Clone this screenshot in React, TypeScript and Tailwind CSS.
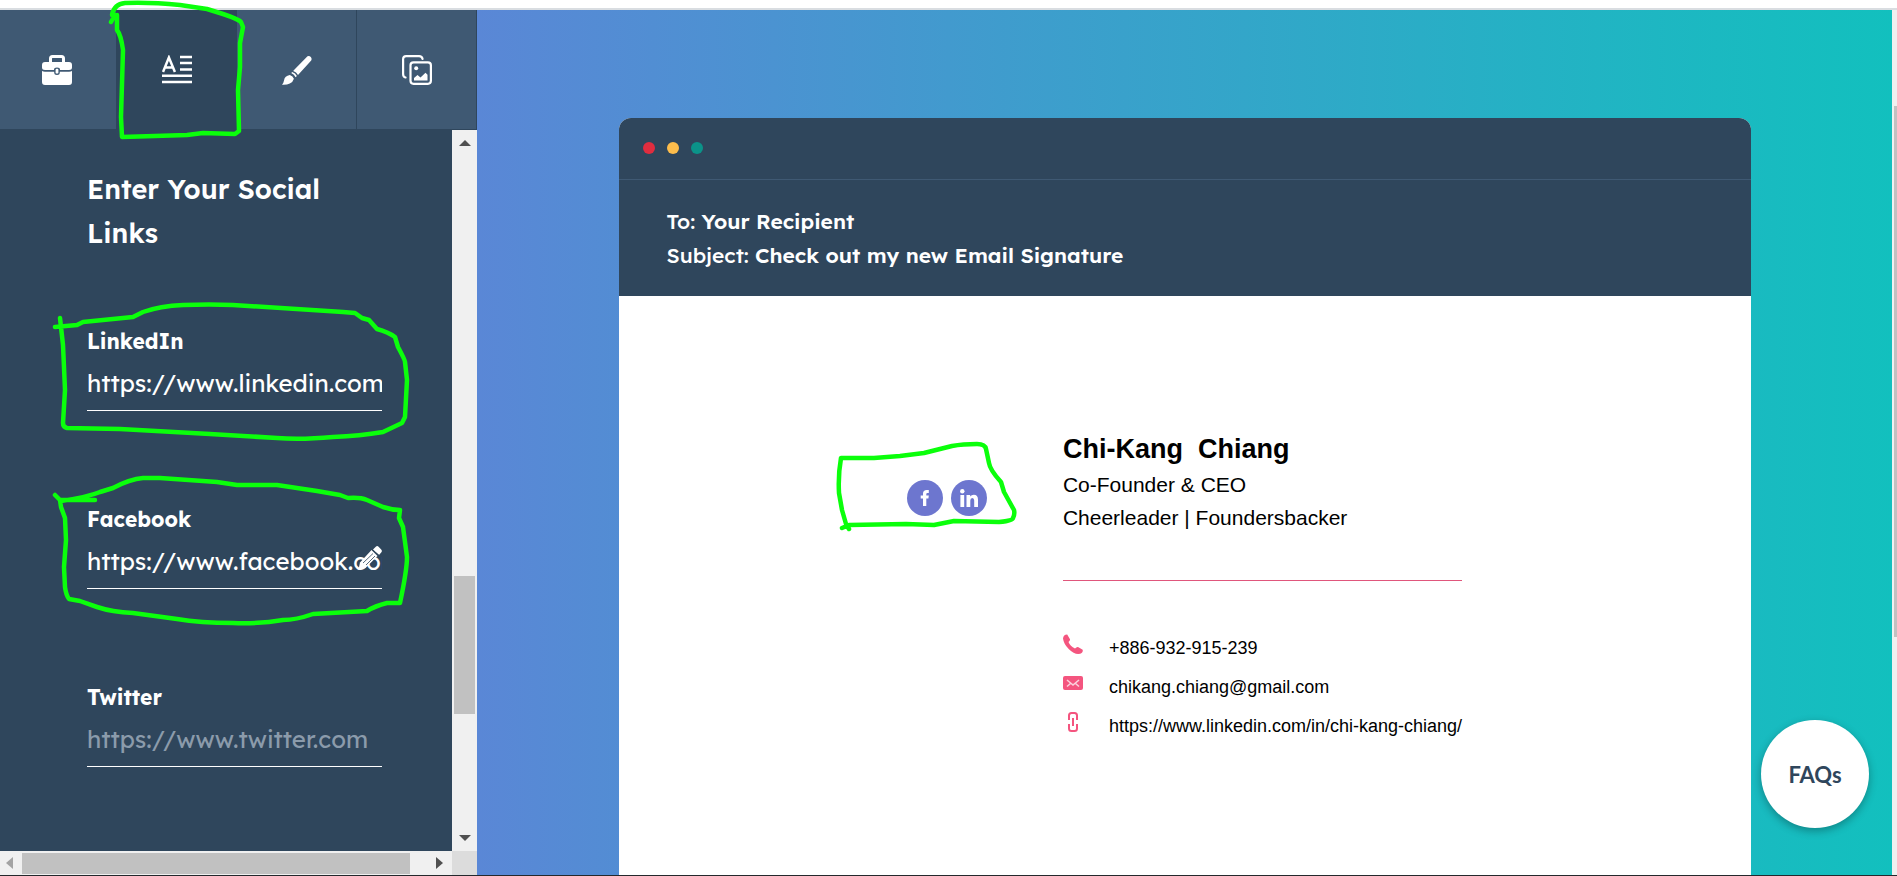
import React from "react";

const WIDE = "font-['Lexend','Open_Sans',sans-serif]";

function BriefcaseIcon() {
  return (
    <svg viewBox="0 0 30 30" className="size-[30px]" aria-hidden="true">
      <path d="M8.500 8V3.500a2 2 0 0 1 2-2h9a2 2 0 0 1 2 2V8" fill="none" stroke="#fff" strokeWidth="3" />
      <path d="M3 7h24a3 3 0 0 1 3 3v2.500q0 2.500-3 2.500h-9v-.5q0-2-3-2t-3 2v.5H3q-3 0-3-2.500V10a3 3 0 0 1 3-3Z" fill="#fff" />
      <path d="M0 16q1.200.8 3 .8h9.200v.7q0 2.500 2.800 2.500t2.800-2.500v-.7H27q1.800 0 3-.8v11a3 3 0 0 1-3 3H3a3 3 0 0 1-3-3Z" fill="#fff" />
      <rect x="13.600" y="13.800" width="2.800" height="4.800" rx="1.200" fill="#fff" />
    </svg>
  );
}

function TextIcon() {
  return (
    <svg viewBox="0 0 30 30" className="size-[30px]" aria-hidden="true" fill="none" stroke="#fff">
      <path d="M1 17 6.900 2.500 12.900 17M3.200 12.400h7.400" strokeWidth="2.500" />
      <path d="M18 2h12M18 8h12M18 14.500h12M0 20.700h30M0 27h30" strokeWidth="2.500" />
    </svg>
  );
}

function BrushIcon() {
  return (
    <svg viewBox="0 0 30 30" className="size-[30px]" aria-hidden="true" fill="#fff">
      <path d="M12.500 14.500 25.500 1.200a3 3 0 0 1 3.700 4.200L16 20a8 8 0 0 0-4.800-4Z" />
      <path d="m9.200 18 1-1.100q3.200 1 4.700 4.100l-1.300 1.300q-1.300-3.100-4.400-4.300Z" />
      <path d="M7.800 20q3.200 1 4.100 3.800-.9 3.300-4.100 4.800-3 1.500-7.800 1.200 1.600-2 2-4.400.7-4.600 5.800-5.400Z" />
    </svg>
  );
}

function GalleryIcon() {
  return (
    <svg viewBox="0 0 30 30" className="size-[30px]" aria-hidden="true">
      <path d="M3.500 22.500Q1.100 22 1.100 19V4a3 3 0 0 1 3-2.900h13q2.900 0 3.400 2.700" fill="none" stroke="#fff" strokeWidth="2.200" strokeLinecap="round" />
      <rect x="8.500" y="7.300" width="20.400" height="21.500" rx="3" fill="none" stroke="#fff" strokeWidth="2.200" />
      <circle cx="14.200" cy="13.200" r="2" fill="#fff" />
      <path d="M12 25.500V23l3.500-3 3 2.400 5-4.700 2 2v5.800Z" fill="#fff" />
    </svg>
  );
}

function PencilIcon() {
  return (
    <svg viewBox="0 0 24 24" className="absolute right-0 bottom-[19px] size-6" aria-hidden="true" fill="#fff">
      <path d="m15 3.500 2.800-2.700a2 2 0 0 1 2.800 0l2.600 2.800a2 2 0 0 1 0 2.800L21 9Z" />
      <path d="m13.500 4 6 6L7.500 22 .5 23.500 2 16.500Z" />
      <path d="m14 3.500 7 6" stroke="#2f465c" strokeWidth="1" />
      <path d="M5 17 15 7.500M8 19l9-9" stroke="#2f465c" strokeWidth=".8" />
    </svg>
  );
}

const tabs = [
  { name: "General", icon: <BriefcaseIcon />, look: "bg-[#3f5973] pr-0.5" },
  { name: "Social links", icon: <TextIcon />, look: "bg-[#2f465c]" },
  { name: "Design", icon: <BrushIcon />, look: "bg-[#3f5973]" },
  { name: "Images", icon: <GalleryIcon />, look: "bg-[#3f5973]" },
];

type FieldProps = { id: string; label: string; value?: string; placeholder?: string; editing?: boolean };

function Field({ id, label, value, placeholder, editing }: FieldProps) {
  return (
    <div className="relative flex h-[86px] flex-col">
      <label htmlFor={id} className="h-8 text-[21px] leading-8 font-bold">{label}</label>
      <input
        id={id}
        type="url"
        defaultValue={value}
        placeholder={placeholder}
        className="h-[54px] w-full border-b border-white bg-transparent pb-0.5 text-[24px] outline-none placeholder:text-[#8b9bab]"
      />
      {editing && <PencilIcon />}
    </div>
  );
}

function Arrow({ d, color }: { d: string; color: string }) {
  return (
    <svg viewBox="0 0 12 12" className="size-3" aria-hidden="true">
      <path d={d} fill={color} />
    </svg>
  );
}

function Sidebar() {
  return (
    <aside className="flex w-[477px] shrink-0 flex-col bg-[#2f465c]">
      <nav className="grid h-[119px] shrink-0 grid-cols-[117fr_120fr_120fr_120fr]">
        {tabs.map((t) => (
          <button key={t.name} type="button" aria-label={t.name} className={`flex items-center justify-center border-r border-[#2f465c] pt-px ${t.look}`}>
            {t.icon}
          </button>
        ))}
      </nav>
      <div className="mt-px flex min-h-0 flex-1">
        <section className="min-w-0 flex-1 overflow-hidden pt-[37px] pr-[70px] pl-[87px] text-white">
          <h2 className="text-[27px] leading-[44px] font-semibold">Enter Your Social Links</h2>
          <div className="mt-[70px] flex flex-col gap-[92px]">
            <Field id="linkedin" label="LinkedIn" value="https://www.linkedin.com" />
            <Field id="facebook" label="Facebook" value="https://www.facebook.com" editing />
            <Field id="twitter" label="Twitter" placeholder="https://www.twitter.com" />
          </div>
        </section>
        <div className="flex w-[25px] flex-col items-center bg-[#f0f0f0] py-[7px]" aria-hidden="true">
          <Arrow d="M0 9 6 3l6 6Z" color="#505050" />
          <div className="flex-[427]" />
          <div className="w-[21px] flex-[138] bg-[#c1c1c1]" />
          <div className="flex-[118]" />
          <Arrow d="M0 3h12L6 9Z" color="#505050" />
        </div>
      </div>
      <div className="flex h-6 shrink-0" aria-hidden="true">
        <div className="flex flex-1 items-center bg-[#f0f0f0] pr-[6px] pl-1">
          <Arrow d="M9 0v12L2 6Z" color="#a3a3a3" />
          <div className="ml-[6px] h-[21px] flex-[388] bg-[#c1c1c1]" />
          <div className="flex-[24]" />
          <Arrow d="M2 0v12l7-6Z" color="#505050" />
        </div>
        <div className="w-[25px] bg-[#dcdcdc]" />
      </div>
    </aside>
  );
}

const contacts = [
  {
    text: "+886-932-915-239",
    icon: <path d="M4.200.6 7 5.200Q7.300 6.500 5.500 8q1.700 4 6.500 6.500 1.600-1.800 3-1.500l4.700 2.800q.7 3.700-4.500 4.200-4.500 0-9.500-5T0 4.500Q.5.500 4.200.6Z" fill="#f4557f" />,
  },
  {
    text: "chikang.chiang@gmail.com",
    icon: (
      <>
        <rect y="3" width="20" height="14" rx="2" fill="#f4557f" />
        <path d="m4 7 6 5 6-5M4 13.500l3.500-3M16 13.500l-3.500-3" fill="none" stroke="#fbd0dc" strokeWidth="1.600" />
      </>
    ),
  },
  {
    text: "https://www.linkedin.com/in/chi-kang-chiang/",
    icon: <path d="M6 8V3.500Q6 1 8.500 1h3Q14 1 14 3.500V8M6 12v4.500Q6 19 8.500 19h3q2.500 0 2.500-2.500V12M10 6v8" fill="none" stroke="#f4557f" strokeWidth="2" />,
  },
];

function Signature() {
  return (
    <div className="flex justify-center gap-[76px] pt-[134px] font-['Liberation_Sans',Arial,sans-serif] text-black">
      <div className="flex gap-2 pt-[50px]">
        <a href="#facebook" aria-label="Facebook profile" className="size-9">
          <svg viewBox="0 0 36 36" className="size-9">
            <circle cx="18" cy="18" r="18" fill="#6d76cf" />
            <path d="M16 26v-7.500h-2.300v-3H16v-2q0-3.600 3.800-3.600h2v3h-1.300q-1.200 0-1.200 1.200v1.400h2.500l-.4 3h-2.100V26Z" fill="#fff" />
          </svg>
        </a>
        <a href="#linkedin" aria-label="LinkedIn profile" className="size-9">
          <svg viewBox="0 0 36 36" className="size-9" fill="#fff">
            <circle cx="18" cy="18" r="18" fill="#6d76cf" />
            <circle cx="11.300" cy="11.300" r="2.200" />
            <path d="M9.400 15h3.800v12H9.400ZM15.500 15h3.700v1.600q1.200-1.900 3.600-1.900 4.200 0 4.200 5V27h-3.800v-6.500q0-2.500-1.900-2.500-2 0-2 2.500V27h-3.800Z" />
          </svg>
        </a>
      </div>
      <div>
        <h1 className="text-[27px] leading-[38px] font-bold whitespace-pre">Chi-Kang  Chiang</h1>
        <p className="text-[21px] leading-[33px]">Co-Founder &amp; CEO</p>
        <p className="text-[21px] leading-[33px]">Cheerleader | Foundersbacker</p>
        <hr className="mt-[46px] border-[#e0567c]" />
        <ul className="mt-12">
          {contacts.map((c) => (
            <li key={c.text} className="flex h-[39px] gap-[26px] text-[18px] leading-[39px]">
              <svg viewBox="0 0 20 20" className="mt-[5px] size-5" aria-hidden="true">{c.icon}</svg>
              {c.text}
            </li>
          ))}
        </ul>
      </div>
    </div>
  );
}

function Preview() {
  return (
    <main className="min-w-0 flex-1 overflow-hidden bg-linear-to-r/srgb from-[#5a87d6] to-[#12c0be] pt-[108px]">
      <article className="mx-auto flex h-full w-4/5 flex-col overflow-hidden rounded-t-xl bg-white">
        <header className="bg-[#2f465c] text-white">
          <div className="flex h-[62px] items-center gap-3 border-b border-[#3f5973] px-6 pb-px" aria-hidden="true">
            <span className="size-3 rounded-full bg-[#e02d3f]" />
            <span className="size-3 rounded-full bg-[#fdbd4c]" />
            <span className="size-3 rounded-full bg-[#0b9389]" />
          </div>
          <div className="h-[116px] px-12 pt-6 text-[21px] leading-[34px] font-medium">
            <p>To: <b className="font-semibold">Your Recipient</b></p>
            <p>Subject: <b className="font-semibold">Check out my new Email Signature</b></p>
          </div>
        </header>
        <Signature />
      </article>
    </main>
  );
}

function Marks() {
  return (
    <svg className="pointer-events-none absolute top-0 left-0 h-[640px] w-[1100px]" viewBox="0 0 1100 640" fill="none" stroke="#0bff0b" strokeWidth="4.500" strokeLinecap="round" strokeLinejoin="round" aria-hidden="true">
      <path d="M111 22 115 15 112 15Q114 4 125 3Q150 2 180 5L207 9 223 14Q238 19 241 22L243 27 240 43V67L238 90 239 131 235 134 203 133 187 135 122 137 121 117 123 50Q121 35 117 30L117 15" />
      <path d="M55 327 77 325 83 322 133 317 143 312Q160 306 183 305Q210 304 233 305L343 312 355 313 362 318 369 320 377 329Q388 332 395 337L398 347Q405 360 405 362L407 380 405 417 402 423 383 432Q360 436 333 437 300 440 277 438L210 434 120 429 67 428Q63 427 63 423L65 390 63 345 60 318" />
      <path d="M55 495 60 500 95 500M61 501Q88 497 100 492L113 488Q130 479 143 478H160L217 482 237 485H277L317 491 340 495 348 498Q360 497 367 500L383 507Q392 510 400 510L399 518 403 527 407 557Q407 570 400 603H387Q375 606 367 611L313 614Q296 620 283 620 260 624 233 623 200 623 177 619L133 613Q112 612 97 607L80 601 69 599Q66 595 65 587L64 567 66 540 65 518 61 507 60 500" />
      <path d="M842 528 849 525 906 524 934 525 954 521 999 522Q1013 521 1013 518 1015 514 1014 510L1004 492 1001 482Q990 470 989 463L986 449Q985 444 977 444 963 444 952 446L924 453 900 456 874 458H841Q838 475 839 493L842 510 846 524 849 529" />
    </svg>
  );
}

export default function App() {
  return (
    <div className={`relative flex h-screen flex-col overflow-hidden border-b border-[#24282c] bg-white ${WIDE}`}>
      <div className="h-[10px] shrink-0 border-b-2 border-[#d9dde1]" />
      <div className="flex min-h-0 flex-1">
        <Sidebar />
        <Preview />
        <div className="flex w-[5px] flex-col bg-[#f0f0f0] pl-0.5" aria-hidden="true">
          <div className="flex-[96]" />
          <div className="flex-[531] bg-[#c1c1c1]" />
          <div className="flex-[238]" />
        </div>
      </div>
      <button type="button" className="absolute right-7 bottom-[47px] size-[108px] rounded-full bg-white font-['Lato',sans-serif] text-[22px] font-bold text-[#2f465c] shadow-[0_3px_8px_rgba(0,0,0,0.3)]">
        FAQs
      </button>
      <Marks />
    </div>
  );
}
